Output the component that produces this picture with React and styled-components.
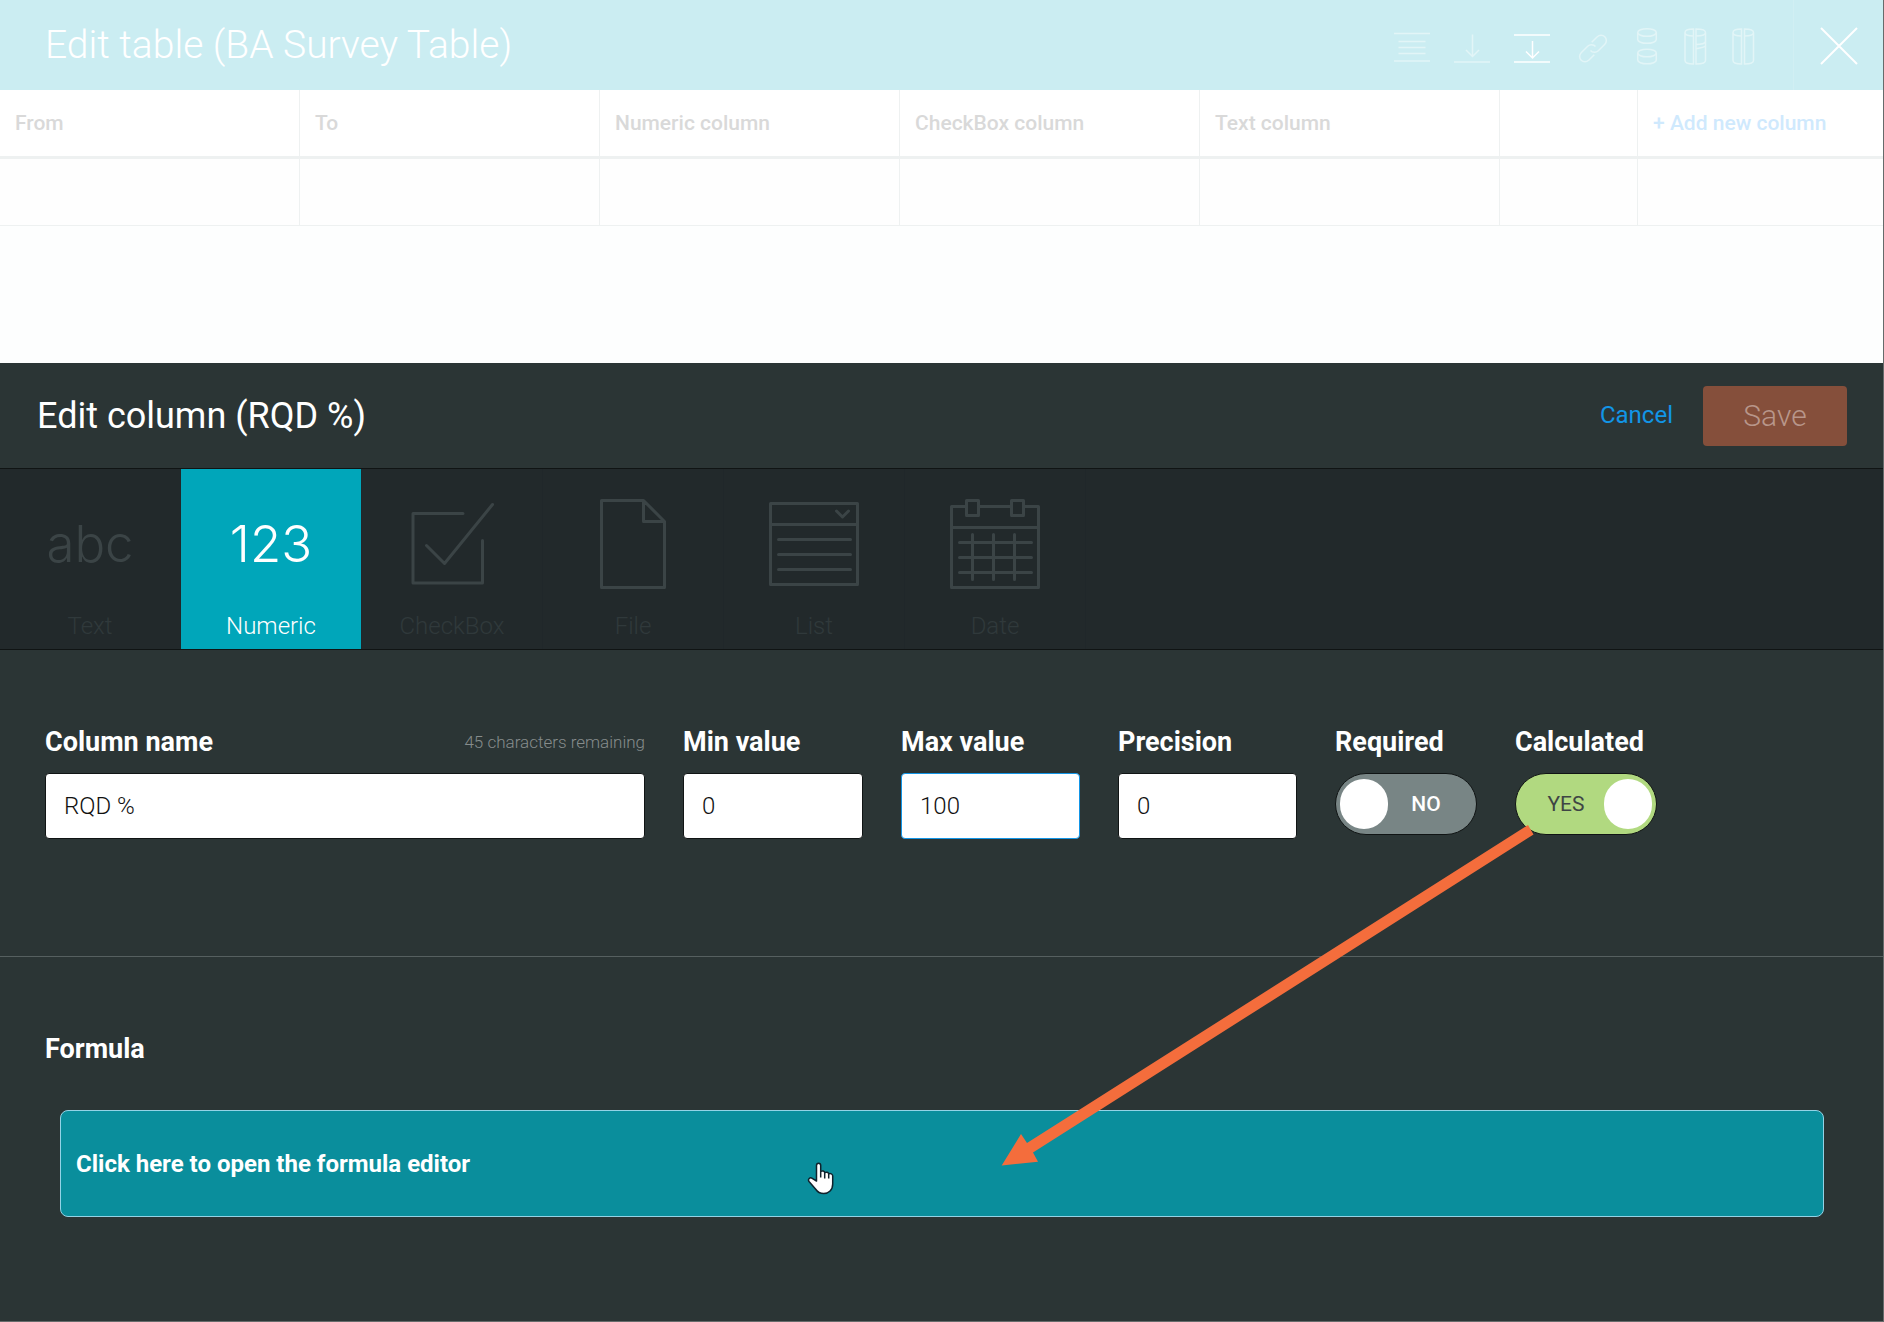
import React, { useState } from "react";
import styled, { createGlobalStyle } from "styled-components";

const GlobalStyle = createGlobalStyle`
  * {
    box-sizing: border-box;
  }
  body {
    margin: 0;
    background: #fdfefe;
    font-family: Roboto, "Liberation Sans", sans-serif;
  }
  button, input {
    font-family: inherit;
  }
`;

const Page = styled.div`
  position: relative;
  display: flex;
  flex-direction: column;
  min-height: 100vh;
  border-right: 1px solid #666b6b;
  border-bottom: 1px solid #666b6b;
`;

const TopBar = styled.header`
  display: flex;
  align-items: center;
  justify-content: space-between;
  height: 90px;
  padding-left: 45px;
  background: #cbedf2;
`;

const TableTitle = styled.h1`
  margin: 0;
  color: white;
  font-size: 39px;
  font-weight: 300;
  line-height: 44px;
`;

const Toolbar = styled.div`
  display: flex;
  align-items: center;
  height: 100%;
`;

const ToolButton = styled.button`
  display: flex;
  align-items: center;
  justify-content: center;
  width: ${({ $narrow }) => ($narrow ? 48 : 60)}px;
  height: 60px;
  padding: 0;
  border: none;
  background: none;
  color: ${({ $active }) => ($active ? "white" : "#e2f5f7")};
  cursor: pointer;
`;

const CloseButton = styled(ToolButton)`
  width: 90px;
  height: 100%;
  margin-left: 27px;
  border-left: 1px solid #d1eff3;
  color: white;
`;

const ColumnsTable = styled.table`
  width: 100%;
  table-layout: fixed;
  border-collapse: separate;
  border-spacing: 0;
`;

const Th = styled.th`
  width: ${({ $width }) => ($width ? `${$width}px` : "auto")};
  height: 69px;
  padding: 0 15px;
  border-right: ${({ $last }) => ($last ? "none" : "1px solid #eef1f1")};
  border-bottom: 3px solid #eef1f1;
  background: white;
  color: #d9d9d9;
  font-size: 21px;
  font-weight: 500;
  text-align: left;
`;

const Td = styled.td`
  height: 67px;
  padding: 0 15px;
  border-right: ${({ $last }) => ($last ? "none" : "1px solid #eef1f1")};
  border-bottom: 1px solid #eef1f1;
  background: #fefefe;
`;

const AddColumn = styled.button`
  padding: 0;
  border: none;
  background: none;
  color: #cfe9fd;
  font-size: 21px;
  font-weight: 500;
  cursor: pointer;
`;

const Panel = styled.main`
  position: relative;
  flex: 1;
  margin-top: 137px;
  background: #2b3535;
`;

const PanelHeader = styled.div`
  display: flex;
  align-items: center;
  height: 106px;
  padding: 0 36px 0 37px;
  border-bottom: 1px solid #101414;
`;

const PanelTitle = styled.h2`
  flex: 1;
  margin: 0;
  color: white;
  font-size: 36px;
  font-weight: 400;
  line-height: 42px;
`;

const CancelLink = styled.a`
  margin-right: 30px;
  padding-bottom: 2px;
  color: #1295e6;
  font-size: 24px;
  text-decoration: none;
`;

const SaveButton = styled.button`
  width: 144px;
  height: 60px;
  padding: 0;
  border: none;
  border-radius: 4px;
  background: #854f3b;
  color: #b8968a;
  font-size: 30px;
  font-weight: 300;
`;

const TypeBar = styled.div`
  display: flex;
  height: 181px;
  border-bottom: 1px solid #101414;
  background: #22292b;
`;

const TypeButton = styled.button`
  display: flex;
  flex-direction: column;
  align-items: center;
  width: 181px;
  padding: 30px 0 0;
  border: none;
  border-right: 1px solid #20272a;
  background: ${({ $active }) => ($active ? "#00a6ba" : "transparent")};
  background-clip: padding-box;
  color: ${({ $active }) => ($active ? "white" : "#3b4446")};
`;

const TypeSample = styled.span`
  height: 90px;
  font-family: Inter, "Liberation Sans", sans-serif;
  font-size: 51px;
  font-weight: 300;
  line-height: 90px;
`;

const TypeName = styled.span`
  margin-top: 23px;
  color: ${({ $active }) => ($active ? "white" : "#30393b")};
  font-size: 24px;
  font-weight: 300;
  line-height: 28px;
`;

const Section = styled.section`
  padding: 76px 44px 0 45px;
`;

const FieldsSection = styled(Section)`
  display: flex;
  gap: 38px;
  padding-bottom: 117px;
  border-bottom: 1px solid #566060;
`;

const Field = styled.div`
  width: ${({ $width }) => $width}px;
`;

const FieldHead = styled.div`
  display: flex;
  align-items: center;
  justify-content: space-between;
  height: 32px;
  margin-bottom: 15px;
  white-space: nowrap;
`;

const FieldLabel = styled.label`
  color: white;
  font-size: 27px;
  font-weight: 700;
  line-height: 32px;
`;

const Hint = styled.span`
  color: #868c8c;
  font-size: 17px;
  font-weight: 300;
`;

const TextInput = styled.input`
  display: block;
  width: 100%;
  height: 66px;
  padding: 0 18px;
  border: 1px solid ${({ $focused }) => ($focused ? "#1295e6" : "#101414")};
  border-radius: 4px;
  outline: none;
  background: white;
  color: #111;
  font-size: 24px;
  font-weight: 300;
`;

const Switch = styled.label`
  display: flex;
  flex-direction: ${({ $on }) => ($on ? "row-reverse" : "row")};
  align-items: center;
  width: 142px;
  height: 62px;
  padding: 0 4px;
  border: 1px solid #101414;
  border-radius: 31px;
  background: ${({ $on }) => ($on ? "#b1d980" : "#788585")};
  cursor: pointer;
`;

const SwitchInput = styled.input`
  position: absolute;
  opacity: 0;
`;

const Knob = styled.span`
  width: 48px;
  height: 50px;
  border-radius: 25px;
  background: white;
`;

const SwitchText = styled.span`
  flex: 1;
  padding: ${({ $on }) => ($on ? "0 0 0 8px" : "0 8px 0 0")};
  color: ${({ $on }) => ($on ? "#3f4545" : "white")};
  font-size: 21px;
  font-weight: ${({ $on }) => ($on ? 400 : 500)};
  text-align: center;
`;

const FormulaTitle = styled.h3`
  margin: 0;
  color: white;
  font-size: 27px;
  font-weight: 700;
  line-height: 32px;
`;

const FormulaButton = styled.button`
  display: block;
  width: calc(100% - 30px);
  height: 107px;
  margin: 45px 15px 60px;
  padding: 0 15px;
  border: 1px solid #93d3e6;
  border-radius: 8px;
  background: #0a8e9c;
  color: white;
  font-size: 24px;
  font-weight: 700;
  text-align: left;
  cursor: pointer;
`;

// lies over the form, from the Calculated switch to the formula button
const Pointer = styled.svg`
  position: absolute;
  top: 462px;
  left: 1001px;
  pointer-events: none;
`;

const HandCursor = styled.svg`
  position: absolute;
  top: 799px;
  left: 807px;
  pointer-events: none;
`;

const ToolIcon = ({ children, width = 1.5 }) => (
  <svg
    width="36"
    height="36"
    viewBox="0 0 36 36"
    overflow="visible"
    fill="none"
    stroke="currentColor"
    strokeWidth={width}
  >
    {children}
  </svg>
);

const TypeIcon = ({ children }) => (
  <svg
    width="90"
    height="90"
    viewBox="0 0 90 90"
    fill="none"
    stroke="currentColor"
    strokeWidth="3"
    strokeLinecap="round"
    strokeLinejoin="round"
  >
    {children}
  </svg>
);

const tools = [
  {
    name: "Rows",
    icon: <path d="M0 6.5h36M4.5 14.5h27M4.5 20.5h27M4.5 26.5h27M0 34h36" />,
  },
  {
    name: "Insert below",
    icon: <path d="M18.5 7.5v22M12 23l6.5 6.5L25 23M0 35h36" />,
  },
  {
    name: "Insert between",
    active: true,
    icon: <path d="M0 8h36M18.5 14v17.5M12 24.5l6.5 6.5 6.5-6.5M0 35h36" />,
  },
  {
    name: "Link",
    icon: (
      <path d="M17.7 15.3l5.6-5.6a5.3 5.3 0 0 1 7.5 7.5l-6.5 6.5a5.3 5.3 0 0 1-7.8-.3M20.3 27.7l-5.6 5.6a5.3 5.3 0 0 1-7.5-7.5l6.5-6.5a5.3 5.3 0 0 1 7.8.3" />
    ),
  },
  {
    name: "Split core",
    narrow: true,
    icon: (
      <>
        <ellipse cx="19" cy="5.5" rx="9.3" ry="3.8" />
        <path d="M9.7 5.5v7c0 2.1 4.2 3.8 9.3 3.8s9.3-1.7 9.3-3.8v-7" />
        <ellipse cx="19" cy="26" rx="9.3" ry="3.8" />
        <path d="M9.7 26v7c0 2.1 4.2 3.8 9.3 3.8s9.3-1.7 9.3-3.8v-7" />
      </>
    ),
  },
  {
    name: "Broken core",
    narrow: true,
    icon: (
      <>
        <path d="M17.5 2v35c-5 0-8.5-1.2-8.5-3.5V5.5C9 3.2 12.5 2 17.5 2zM9 5.5c0 2.2 3.5 3.5 8.5 3.5" />
        <path d="M20 2v35c6 0 9.5-1.2 9.5-3.5V5.5C29.5 3.2 26 2 20 2zM29.5 5.5c0 2.2-3.5 3.5-9.5 3.5M20 17.5c5 0 9-1 9.500-3M20 22c2-1.500 7-.5 9.500-3" />
      </>
    ),
  },
  {
    name: "Half core",
    narrow: true,
    icon: (
      <>
        <path d="M17.5 2v35c-5 0-8.500-1.200-8.500-3.500V5.500C9 3.200 12.500 2 17.500 2zM9 5.500c0 2.200 3.500 3.500 8.500 3.500" />
        <path d="M20.500 2v35c5 0 9-1.200 9-3.500V5.500C29.500 3.200 25.500 2 20.500 2zM29.500 5.500c0 2.200-4 3.500-9 3.500" />
      </>
    ),
  },
];

const columnTypes = [
  { name: "Text", icon: <TypeSample>abc</TypeSample> },
  { name: "Numeric", icon: <TypeSample>123</TypeSample> },
  {
    name: "CheckBox",
    icon: (
      <TypeIcon>
        <path d="M56 14.500H6V84h69.500V41.500" />
        <path d="M19.500 46.500l18 18L85.500 5.500" />
      </TypeIcon>
    ),
  },
  {
    name: "File",
    icon: (
      <TypeIcon>
        <path d="M13.500 1.500h42l21 21v66h-63zM55.500 1.500v21h21" />
      </TypeIcon>
    ),
  },
  {
    name: "List",
    icon: (
      <TypeIcon>
        <path d="M1.500 4.500h87v81h-87zM1.500 25.500h87M67.500 12l6 6 6-6" />
        <path d="M9.500 40.500h72M9.500 55.500h72M9.500 70.500h72" />
      </TypeIcon>
    ),
  },
  {
    name: "Date",
    icon: (
      <TypeIcon>
        <path d="M16.500 7.500h-15v81h87v-81h-15M28.500 7.500h33M1.500 28.500h87" />
        <path d="M16.500 1.500h12v15h-12zM61.500 1.500h12v15h-12z" />
        <path d="M9.500 43.500h72M9.500 58.500h72M9.500 73.500h72M22.500 35.500v45M43.500 35.500v45M64.500 35.500v45" />
      </TypeIcon>
    ),
  },
];

const tableColumns = [
  { name: "From", width: 300 },
  { name: "To", width: 300 },
  { name: "Numeric column", width: 300 },
  { name: "CheckBox column", width: 300 },
  { name: "Text column", width: 300 },
  { name: "", width: 138 },
];

function InputField({ id, label, width, value, hint, focused, onChange }) {
  return (
    <Field $width={width}>
      <FieldHead>
        <FieldLabel htmlFor={id}>{label}</FieldLabel>
        {hint && <Hint>{hint}</Hint>}
      </FieldHead>
      <TextInput
        id={id}
        type="text"
        value={value}
        $focused={focused}
        onChange={(e) => onChange(e.target.value)}
      />
    </Field>
  );
}

function SwitchField({ id, label, on, onChange }) {
  return (
    <Field $width={142}>
      <FieldHead>
        <FieldLabel htmlFor={id}>{label}</FieldLabel>
      </FieldHead>
      <Switch $on={on}>
        <SwitchInput
          id={id}
          type="checkbox"
          checked={on}
          onChange={(e) => onChange(e.target.checked)}
        />
        <Knob />
        <SwitchText $on={on}>{on ? "YES" : "NO"}</SwitchText>
      </Switch>
    </Field>
  );
}

function App() {
  const [name, setName] = useState("RQD %");
  const [min, setMin] = useState("0");
  const [max, setMax] = useState("100");
  const [precision, setPrecision] = useState("0");
  const [required, setRequired] = useState(false);
  const [calculated, setCalculated] = useState(true);

  return (
    <>
      <GlobalStyle />
      <Page>
        <TopBar>
          <TableTitle>Edit table (BA Survey Table)</TableTitle>
          <Toolbar>
            {tools.map((tool) => (
              <ToolButton
                key={tool.name}
                aria-label={tool.name}
                $narrow={tool.narrow}
                $active={tool.active}
              >
                <ToolIcon>{tool.icon}</ToolIcon>
              </ToolButton>
            ))}
            <CloseButton aria-label="Close">
              <ToolIcon width={2}>
                <path d="M0 1l36 36M36 1L0 37" />
              </ToolIcon>
            </CloseButton>
          </Toolbar>
        </TopBar>

        <ColumnsTable>
          <thead>
            <tr>
              {tableColumns.map((col, i) => (
                <Th key={i} $width={col.width}>
                  {col.name}
                </Th>
              ))}
              <Th $last>
                <AddColumn>+ Add new column</AddColumn>
              </Th>
            </tr>
          </thead>
          <tbody>
            <tr>
              {tableColumns.map((col, i) => (
                <Td key={i} />
              ))}
              <Td $last />
            </tr>
          </tbody>
        </ColumnsTable>

        <Panel>
          <PanelHeader>
            <PanelTitle>Edit column (RQD %)</PanelTitle>
            <CancelLink href="#">Cancel</CancelLink>
            <SaveButton disabled>Save</SaveButton>
          </PanelHeader>

          <TypeBar>
            {columnTypes.map((type) => {
              const active = type.name === "Numeric";
              return (
                <TypeButton key={type.name} $active={active}>
                  {type.icon}
                  <TypeName $active={active}>{type.name}</TypeName>
                </TypeButton>
              );
            })}
          </TypeBar>

          <FieldsSection>
            <InputField
              id="column-name"
              label="Column name"
              hint="45 characters remaining"
              width={600}
              value={name}
              onChange={setName}
            />
            <InputField id="min" label="Min value" width={180} value={min} onChange={setMin} />
            <InputField
              id="max"
              label="Max value"
              width={179}
              value={max}
              onChange={setMax}
              focused
            />
            <InputField
              id="precision"
              label="Precision"
              width={179}
              value={precision}
              onChange={setPrecision}
            />
            <SwitchField id="required" label="Required" on={required} onChange={setRequired} />
            <SwitchField
              id="calculated"
              label="Calculated"
              on={calculated}
              onChange={setCalculated}
            />
          </FieldsSection>

          <Section>
            <FormulaTitle>Formula</FormulaTitle>
            <FormulaButton>Click here to open the formula editor</FormulaButton>
          </Section>

          <Pointer width="534" height="342" viewBox="0 0 534 342">
            <path
              fill="#f46d3c"
              d="M527 0l5.500 9.500L32 327.500l5 9.200L.7 340.500 20 309l6 9z"
            />
          </Pointer>
          <HandCursor width="28" height="34" viewBox="0 0 28 34">
            <path
              fill="white"
              stroke="#10222c"
              strokeWidth="1.500"
              strokeLinejoin="round"
              d="M9.500 19V3.500c0-3 4.200-3 4.200 0V9.500c1.500-1 3.700-.5 4 1.200 1.500-1 3.700-.5 4 1.200 1.700-.8 4 0 4 2.200V22c0 6-4 9.500-9 9.500-3.500 0-6.200-1.500-8.200-4.500L2 19.500c-1.500-2.500 1-4.500 3.200-3.200z"
            />
            <path stroke="#10222c" strokeWidth="1.500" d="M13.700 9.500v6M17.700 10.500v6M21.700 11.500v5" />
          </HandCursor>
        </Panel>
      </Page>
    </>
  );
}

export default App;
